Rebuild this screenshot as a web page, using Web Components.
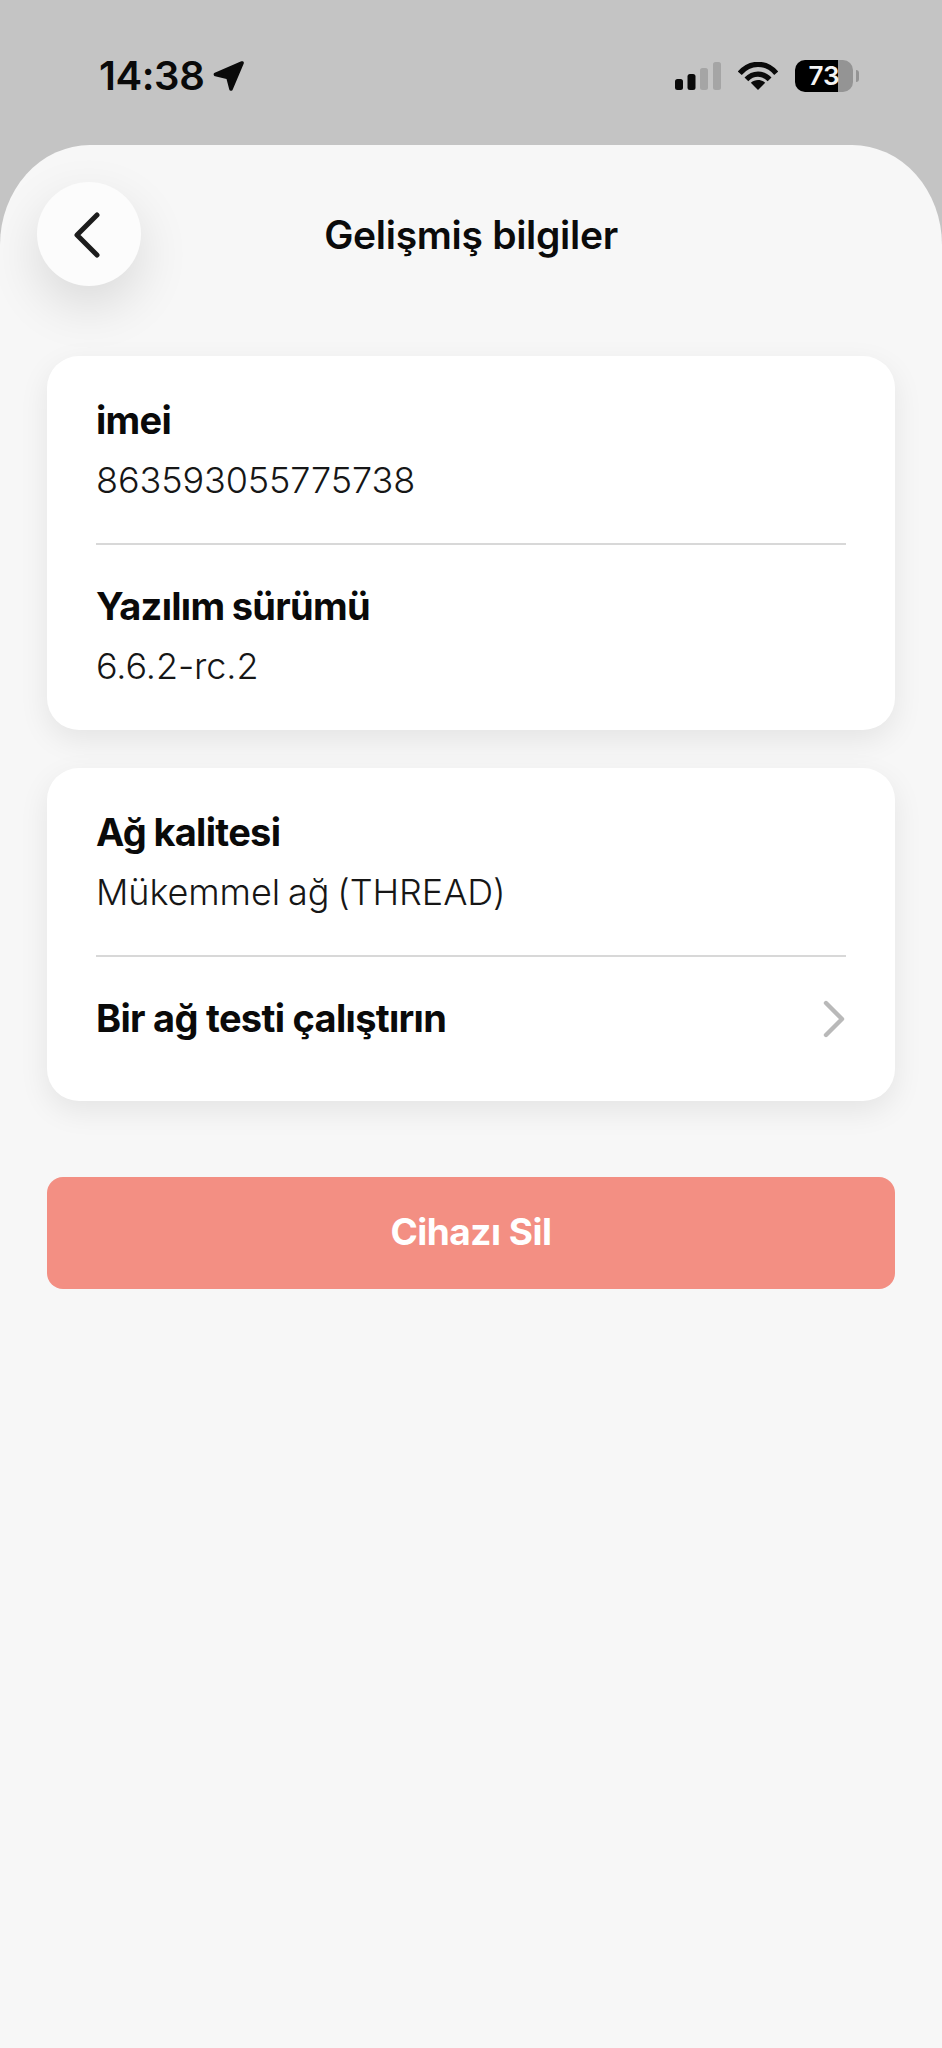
<!DOCTYPE html>
<html lang="tr">
<head>
<meta charset="utf-8">
<title>Gelişmiş bilgiler</title>
<style>
  html, body { margin: 0; height: 100%; }
  body { background: #c4c4c4; font-family: Inter, "Liberation Sans", sans-serif; color: #0b0b0b; }
  #app { display: flex; flex-direction: column; height: 2048px; overflow: hidden; }
</style>
</head>
<body>
<div id="app">
  <status-bar time="14:38" battery="73"></status-bar>
  <detail-sheet>
    <nav-header slot="header" title="Gelişmiş bilgiler"></nav-header>
    <info-card>
      <info-row label="imei" value="863593055775738"></info-row>
      <info-row label="Yazılım sürümü" value="6.6.2-rc.2"></info-row>
    </info-card>
    <info-card>
      <info-row label="Ağ kalitesi" value="Mükemmel ağ (THREAD)"></info-row>
      <info-row label="Bir ağ testi çalıştırın" link></info-row>
    </info-card>
    <danger-button>Cihazı Sil</danger-button>
  </detail-sheet>
</div>

<script>
class StatusBar extends HTMLElement {
  constructor() {
    super();
    const shadow = this.attachShadow({ mode: 'open' });
    shadow.innerHTML = `
      <style>
        :host { display: flex; flex: none; height: 145px; box-sizing: border-box; padding: 59px 83px 0 99px; justify-content: space-between; align-items: flex-start; }
        .left, .right { display: flex; align-items: center; height: 34px; }
        .time { font-size: 40px; font-weight: 600; line-height: 34px; letter-spacing: -0.4px; color: #0a0a0a; }
        .arrow { width: 31px; height: 30px; margin-left: 9px; }
        .signal { width: 46px; height: 28px; }
        .wifi { width: 40px; height: 28px; margin-left: 17px; }
        .battery { position: relative; width: 58px; height: 32px; margin-left: 17px; border-radius: 10px; overflow: hidden;
          background: linear-gradient(90deg, #000 0 43px, #949494 43px); color: #f4f4f4;
          font-size: 26px; font-weight: 600; line-height: 32px; text-align: center; }
        .tip { width: 3px; height: 12px; margin-left: 3px; background: #949494; border-radius: 0 6px 6px 0; }
      </style>
      <div class="left">
        <span class="time">${this.getAttribute('time')}</span>
        <svg class="arrow" viewBox="0 0 31 30"><path d="M29 2 2.5 13.5 15 16.5 18 28Z" fill="#0a0a0a" stroke="#0a0a0a" stroke-width="3.6" stroke-linejoin="round"/></svg>
      </div>
      <div class="right">
        <svg class="signal" viewBox="0 0 46 28">
          <rect x="0" y="17" width="8" height="11" rx="2.5" fill="#0a0a0a"/>
          <rect x="12.5" y="12" width="8" height="16" rx="2.5" fill="#0a0a0a"/>
          <rect x="25" y="6" width="8" height="22" rx="2.5" fill="#a5a5a5"/>
          <rect x="38" y="0" width="8" height="28" rx="2.5" fill="#a5a5a5"/>
        </svg>
        <svg class="wifi" viewBox="0 0 40 28" fill="none" stroke="#0a0a0a" stroke-width="5.2">
          <path d="M1.8 11.2C12-.6 28-.6 38.2 11.2"/>
          <path d="M8.4 17.4C15 10.4 25 10.4 31.6 17.4"/>
          <path d="M20 28 12.8 20.8C17 17 23 17 27.2 20.8Z" fill="#0a0a0a" stroke="none"/>
        </svg>
        <div class="battery">${this.getAttribute('battery')}</div>
        <div class="tip"></div>
      </div>`;
  }
}

class DetailSheet extends HTMLElement {
  constructor() {
    super();
    const shadow = this.attachShadow({ mode: 'open' });
    shadow.innerHTML = `
      <style>
        :host { display: block; flex: 1; background: #f7f7f7; border-radius: 90px 90px 0 0 / 100px 100px 0 0; overflow: hidden; }
        .content { display: flex; flex-direction: column; gap: 38px; padding: 0 47px; margin-top: 70px; }
        ::slotted(danger-button) { margin-top: 38px; }
      </style>
      <slot name="header"></slot>
      <div class="content"><slot></slot></div>`;
  }
}

class NavHeader extends HTMLElement {
  constructor() {
    super();
    const shadow = this.attachShadow({ mode: 'open' });
    shadow.innerHTML = `
      <style>
        :host { display: grid; grid-template-columns: 104px 1fr 104px; align-items: center; padding: 37px 37px 0; }
        .back { width: 104px; height: 104px; border-radius: 50%; background: #fcfcfc; display: flex; align-items: center; justify-content: center;
          box-shadow: 0 20px 52px rgba(0, 0, 0, 0.12); }
        svg { width: 29px; height: 48px; margin: 1px 0 0 -5px; }
        h1 { margin: 0; font-size: 39px; font-weight: 600; text-align: center; letter-spacing: -0.3px; color: #0b0b0b; }
      </style>
      <div class="back">
        <svg viewBox="0 0 29 48"><path d="M25 4 5 24l20 20" fill="none" stroke="#1c1c1c" stroke-width="5" stroke-linecap="round" stroke-linejoin="round"/></svg>
      </div>
      <h1>${this.getAttribute('title')}</h1>`;
  }
}

class InfoCard extends HTMLElement {
  constructor() {
    super();
    const shadow = this.attachShadow({ mode: 'open' });
    shadow.innerHTML = `
      <style>
        :host { display: block; background: #fff; border-radius: 32px; padding: 0 49px; box-shadow: 0 10px 30px rgba(0, 0, 0, 0.08); }
      </style>
      <slot></slot>`;
  }
}

class InfoRow extends HTMLElement {
  constructor() {
    super();
    const shadow = this.attachShadow({ mode: 'open' });
    const link = this.hasAttribute('link');
    shadow.innerHTML = `
      <style>
        :host { display: flex; align-items: center; justify-content: space-between; box-sizing: border-box; height: ${link ? 146 : 187}px; }
        :host(:not(:first-child)) { border-top: 2px solid #d8d8d8; }
        .text { display: flex; flex-direction: column; gap: 16px; margin-top: ${link ? -23 : 0}px; }
        :host(:not(:first-child):not([link])) .text { margin-top: -4px; }
        .label { font-size: 38px; font-weight: 700; line-height: 44px; letter-spacing: -0.7px; word-spacing: ${link ? 0 : -1}px; color: #0a0a0a; }
        .value { font-size: 36px; font-weight: 300; line-height: 44px; letter-spacing: -0.1px; word-spacing: -2px; color: #161616; }
        svg { width: 22px; height: 38px; margin-right: 1px; margin-top: -20px; }
      </style>
      <div class="text">
        <div class="label">${this.getAttribute('label')}</div>
        ${link ? '' : `<div class="value">${this.getAttribute('value')}</div>`}
      </div>
      ${link ? '<svg viewBox="0 0 22 38"><path d="M3 3 19 19 3 35" fill="none" stroke="#b9b9b9" stroke-width="4.4" stroke-linecap="round" stroke-linejoin="round"/></svg>' : ''}`;
  }
}

class DangerButton extends HTMLElement {
  constructor() {
    super();
    const shadow = this.attachShadow({ mode: 'open' });
    shadow.innerHTML = `
      <style>
        :host { display: flex; align-items: center; justify-content: center; box-sizing: border-box; height: 112px; padding-bottom: 3px; background: #f38f83; border-radius: 16px; color: #fff; font-size: 37px; font-weight: 700; letter-spacing: -0.5px; }
      </style>
      <slot></slot>`;
  }
}

customElements.define('status-bar', StatusBar);
customElements.define('detail-sheet', DetailSheet);
customElements.define('nav-header', NavHeader);
customElements.define('info-card', InfoCard);
customElements.define('info-row', InfoRow);
customElements.define('danger-button', DangerButton);
</script>
</body>
</html>
